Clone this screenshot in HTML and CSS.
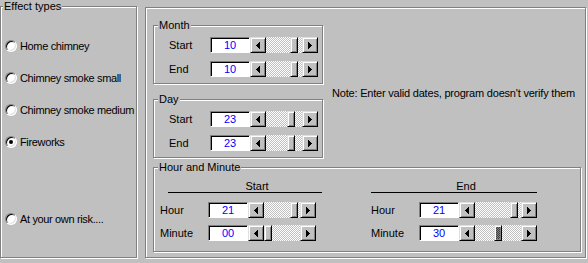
FILE: index.html
```html
<!DOCTYPE html>
<html lang="en">
<head>
    <meta charset="UTF-8">
    <title>Effect settings</title>
    <link rel="stylesheet" href="styles.css">
</head>
<body>
<div class="window">
    <div class="group effects">
        <span class="caption">Effect types</span>
        <div class="radios">
            <label class="radio"><span class="dot"></span>Home chimney</label>
            <label class="radio"><span class="dot"></span>Chimney smoke small</label>
            <label class="radio"><span class="dot"></span>Chimney smoke medium</label>
            <label class="radio"><span class="dot on"></span>Fireworks</label>
            <label class="radio far"><span class="dot"></span>At your own risk....</label>
        </div>
    </div>

    <div class="group frame">
        <div class="dates">
            <div class="date-groups">
                <div class="group small">
                    <span class="caption">Month</span>
                    <div class="fields">
                        <div class="field">
                            <span class="label">Start</span>
                            <span class="edit">10</span>
                            <div class="scroll">
                                <span class="btn"><svg width="4" height="7"><path d="M0 3h1v1H0zM1 2h1v3H1zM2 1h1v5H2zM3 0h1v7H3z"/></svg></span>
                                <span class="track"><span class="thumb" style="margin-left:24px"></span></span>
                                <span class="btn"><svg width="4" height="7"><path d="M0 0h1v7H0zM1 1h1v5H1zM2 2h1v3H2zM3 3h1v1H3z"/></svg></span>
                            </div>
                        </div>
                        <div class="field">
                            <span class="label">End</span>
                            <span class="edit">10</span>
                            <div class="scroll">
                                <span class="btn"><svg width="4" height="7"><path d="M0 3h1v1H0zM1 2h1v3H1zM2 1h1v5H2zM3 0h1v7H3z"/></svg></span>
                                <span class="track"><span class="thumb" style="margin-left:24px"></span></span>
                                <span class="btn"><svg width="4" height="7"><path d="M0 0h1v7H0zM1 1h1v5H1zM2 2h1v3H2zM3 3h1v1H3z"/></svg></span>
                            </div>
                        </div>
                    </div>
                </div>

                <div class="group small">
                    <span class="caption">Day</span>
                    <div class="fields">
                        <div class="field">
                            <span class="label">Start</span>
                            <span class="edit">23</span>
                            <div class="scroll">
                                <span class="btn"><svg width="4" height="7"><path d="M0 3h1v1H0zM1 2h1v3H1zM2 1h1v5H2zM3 0h1v7H3z"/></svg></span>
                                <span class="track"><span class="thumb" style="margin-left:21px"></span></span>
                                <span class="btn"><svg width="4" height="7"><path d="M0 0h1v7H0zM1 1h1v5H1zM2 2h1v3H2zM3 3h1v1H3z"/></svg></span>
                            </div>
                        </div>
                        <div class="field">
                            <span class="label">End</span>
                            <span class="edit">23</span>
                            <div class="scroll">
                                <span class="btn"><svg width="4" height="7"><path d="M0 3h1v1H0zM1 2h1v3H1zM2 1h1v5H2zM3 0h1v7H3z"/></svg></span>
                                <span class="track"><span class="thumb" style="margin-left:21px"></span></span>
                                <span class="btn"><svg width="4" height="7"><path d="M0 0h1v7H0zM1 1h1v5H1zM2 2h1v3H2zM3 3h1v1H3z"/></svg></span>
                            </div>
                        </div>
                    </div>
                </div>
            </div>

            <p class="note">Note: Enter valid dates, program doesn't verify them</p>
        </div>

        <div class="group time">
            <span class="caption">Hour and Minute</span>
            <div class="columns">
                <div class="col col-start">
                    <div class="head">Start</div>
                    <div class="fields">
                        <div class="field">
                            <span class="label">Hour</span>
                            <span class="edit">21</span>
                            <div class="scroll">
                                <span class="btn"><svg width="4" height="7"><path d="M0 3h1v1H0zM1 2h1v3H1zM2 1h1v5H2zM3 0h1v7H3z"/></svg></span>
                                <span class="track"><span class="thumb" style="margin-left:26px"></span></span>
                                <span class="btn"><svg width="4" height="7"><path d="M0 0h1v7H0zM1 1h1v5H1zM2 2h1v3H2zM3 3h1v1H3z"/></svg></span>
                            </div>
                        </div>
                        <div class="field">
                            <span class="label">Minute</span>
                            <span class="edit">00</span>
                            <div class="scroll">
                                <span class="btn"><svg width="4" height="7"><path d="M0 3h1v1H0zM1 2h1v3H1zM2 1h1v5H2zM3 0h1v7H3z"/></svg></span>
                                <span class="track"><span class="thumb" style="margin-left:0px"></span></span>
                                <span class="btn"><svg width="4" height="7"><path d="M0 0h1v7H0zM1 1h1v5H1zM2 2h1v3H2zM3 3h1v1H3z"/></svg></span>
                            </div>
                        </div>
                    </div>
                </div>

                <div class="col col-end">
                    <div class="head">End</div>
                    <div class="fields">
                        <div class="field">
                            <span class="label">Hour</span>
                            <span class="edit">21</span>
                            <div class="scroll wide">
                                <span class="btn"><svg width="4" height="7"><path d="M0 3h1v1H0zM1 2h1v3H1zM2 1h1v5H2zM3 0h1v7H3z"/></svg></span>
                                <span class="track"><span class="thumb" style="margin-left:35px"></span></span>
                                <span class="btn"><svg width="4" height="7"><path d="M0 0h1v7H0zM1 1h1v5H1zM2 2h1v3H2zM3 3h1v1H3z"/></svg></span>
                            </div>
                        </div>
                        <div class="field">
                            <span class="label">Minute</span>
                            <span class="edit">30</span>
                            <div class="scroll wide">
                                <span class="btn"><svg width="4" height="7"><path d="M0 3h1v1H0zM1 2h1v3H1zM2 1h1v5H2zM3 0h1v7H3z"/></svg></span>
                                <span class="track"><span class="thumb focus" style="margin-left:19px"></span></span>
                                <span class="btn"><svg width="4" height="7"><path d="M0 0h1v7H0zM1 1h1v5H1zM2 2h1v3H2zM3 3h1v1H3z"/></svg></span>
                            </div>
                        </div>
                    </div>
                </div>
            </div>
        </div>
    </div>
</div>
</body>
</html>
```

FILE: styles.css
```css
body {
    margin: 0;
    background-color: #c0c0c0;
    font-family: "Liberation Sans", Arial, sans-serif;
    font-size: 11px;
    color: #000;
    white-space: nowrap;
}
.window {
    display: flex;
    align-items: flex-start;
    width: 588px;
    height: 263px;
}

/* etched group boxes */
.group {
    box-sizing: border-box;
    flex: none;
    border: 1px solid #808080;
    box-shadow: inset 1px 1px 0 #fff, 1px 1px 0 #fff;
}
.caption {
    display: block;
    width: fit-content;
    height: 13px;
    line-height: 13px;
    margin: -7px 0 0 4px;
    padding: 0 1px;
    background-color: #c0c0c0;
}
.effects {
    width: 137px;
    height: 252px;
    margin-top: 6px;
}
.effects .caption {
    margin-left: 2px;
}
.frame {
    width: 441px;
    height: 251px;
    margin: 7px 0 0 8px;
    padding: 17px 0 0 7px;
}

/* radio buttons */
.radios {
    display: flex;
    flex-direction: column;
    gap: 18px;
    padding: 26px 0 0 4px;
}
.radio {
    display: flex;
    align-items: center;
    gap: 3px;
    height: 14px;
    line-height: 14px;
    letter-spacing: -0.35px;
}
.radio.far {
    margin-top: 45px;
}
.dot {
    position: relative;
    box-sizing: border-box;
    flex: none;
    width: 12px;
    height: 12px;
    border-radius: 50%;
    border: 1px solid;
    border-color: #808080 #fff #fff #808080;
    box-shadow: inset 1px 1px 0 #000, inset -1px -1px 0 #dfdfdf;
    background-color: #fff;
}
.dot.on::after {
    content: "";
    position: absolute;
    left: 3px;
    top: 3px;
    width: 4px;
    height: 4px;
    border-radius: 50%;
    background-color: #000;
}

/* date groups */
.dates {
    display: flex;
    align-items: flex-start;
}
.date-groups {
    display: flex;
    flex-direction: column;
    gap: 15px;
}
.small {
    width: 170px;
    height: 59px;
}
.small .fields {
    margin: 5px 0 0 15px;
    gap: 8px;
}
.small .label {
    width: 41px;
}
.note {
    margin: 61px 0 0 9px;
    line-height: 14px;
    letter-spacing: -0.2px;
}

/* edit + scrollbar pairs */
.fields {
    display: flex;
    flex-direction: column;
}
.field {
    display: flex;
    align-items: center;
    height: 16px;
}
.label {
    flex: none;
}
.edit {
    box-sizing: border-box;
    flex: none;
    width: 40px;
    height: 16px;
    border: 1px solid;
    border-color: #808080 #fff #fff #808080;
    box-shadow: inset 1px 1px 0 #000;
    background-color: #fff;
    color: #00f;
    text-align: center;
    line-height: 14px;
}
.scroll {
    display: flex;
    flex: none;
    width: 68px;
    height: 16px;
}
.scroll.wide {
    width: 78px;
}
.btn, .thumb {
    box-sizing: border-box;
    flex: none;
    height: 16px;
    border: 1px solid;
    border-color: #dfdfdf #000 #000 #dfdfdf;
    box-shadow: inset 1px 1px 0 #fff, inset -1px -1px 0 #808080;
    background-color: #c0c0c0;
}
.btn {
    display: flex;
    align-items: center;
    justify-content: center;
    width: 16px;
}
.btn svg {
    shape-rendering: crispEdges;
}
.track {
    flex: 1;
    display: flex;
    background: repeating-conic-gradient(#fff 0 25%, #c0c0c0 0 50%) 0 0 / 2px 2px;
}
.thumb {
    width: 8px;
}
.thumb.focus {
    background: repeating-conic-gradient(#404040 0 25%, #808080 0 50%) 0 0 / 2px 2px;
}

/* hour and minute */
.time {
    width: 428px;
    height: 85px;
    margin-top: 9px;
}
.columns {
    display: flex;
    margin-top: 6px;
}
.col-start {
    width: 162px;
    margin-left: 6px;
}
.col-start .head {
    width: 154px;
    margin-left: 8px;
}
.col-end {
    margin-left: 49px;
}
.col-end .head {
    width: 166px;
}
.head {
    box-sizing: border-box;
    height: 13px;
    line-height: 12px;
    padding-left: 24px;
    border-bottom: 1px solid #000;
    text-align: center;
}
.time .fields {
    margin-top: 9px;
    gap: 7px;
}
.time .label {
    width: 48px;
}
```
